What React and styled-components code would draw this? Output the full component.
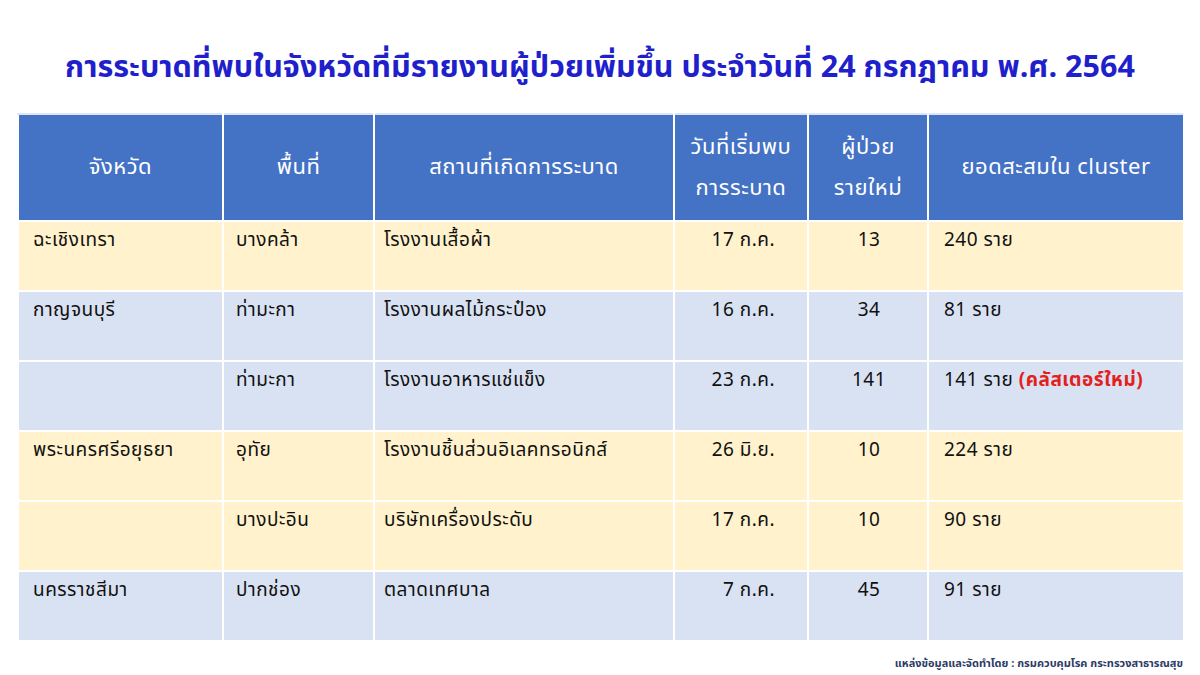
import React from 'react'
import styled, { createGlobalStyle } from 'styled-components'

const GlobalStyle = createGlobalStyle`
  body {
    margin: 0;
    background: #ffffff;
    font-family: Tahoma, "Noto Sans Thai", "Noto Sans", "DejaVu Sans", sans-serif;
  }
`

const Page = styled.div`
  width: 1200px;
  height: 675px;
  box-sizing: border-box;
  padding: 48px 17px 0 17px;
  display: flex;
  flex-direction: column;
`

const Title = styled.h1`
  margin: 0 0 25px 0;
  font-size: 30.5px;
  line-height: 40px;
  font-weight: 700;
  color: #1f1fcc;
  text-align: center;
  white-space: nowrap;
`

const Table = styled.table`
  width: 1166px;
  table-layout: fixed;
  border-collapse: collapse;
  font-size: 19px;
  letter-spacing: 0.5px;
`

const HeadCell = styled.th`
  height: 105px;
  padding: 0 4px;
  background: #4472c4;
  color: #ffffff;
  font-weight: 400;
  font-size: 22px;
  line-height: 41px;
  text-align: center;
  vertical-align: middle;
  border: 2px solid #ffffff;
  border-top-color: #dfe6f3;
  white-space: nowrap;
`

const Row = styled.tr`
  height: 70px;
  background: ${p => (p.$tone === 'yellow' ? '#fff2cc' : '#d9e2f3')};
`

const Cell = styled.td`
  padding: 7px ${p => (p.$align === 'right' ? '32px' : '10px')} 0 ${p => p.$indent || '14px'};
  vertical-align: top;
  text-align: ${p => p.$align || 'left'};
  color: #111111;
  line-height: 24px;
  border: 2px solid #ffffff;
  white-space: nowrap;
  overflow: hidden;
`

const NewTag = styled.span`
  color: #e3211c;
  font-weight: 700;
`

const Source = styled.div`
  margin-top: 13px;
  text-align: right;
  font-size: 11px;
  font-weight: 700;
  color: #2c3a66;
`

const rows = [
  { tone: 'yellow', province: 'ฉะเชิงเทรา', area: 'บางคล้า', place: 'โรงงานเสื้อผ้า', date: '17 ก.ค.', cases: '13', total: '240 ราย' },
  { tone: 'blue', province: 'กาญจนบุรี', area: 'ท่ามะกา', place: 'โรงงานผลไม้กระป๋อง', date: '16 ก.ค.', cases: '34', total: '81 ราย' },
  { tone: 'blue', province: '', area: 'ท่ามะกา', place: 'โรงงานอาหารแช่แข็ง', date: '23 ก.ค.', cases: '141', total: '141 ราย', isNew: true },
  { tone: 'yellow', province: 'พระนครศรีอยุธยา', area: 'อุทัย', place: 'โรงงานชิ้นส่วนอิเลคทรอนิกส์', date: '26 มิ.ย.', cases: '10', total: '224 ราย' },
  { tone: 'yellow', province: '', area: 'บางปะอิน', place: 'บริษัทเครื่องประดับ', date: '17 ก.ค.', cases: '10', total: '90 ราย' },
  { tone: 'blue', province: 'นครราชสีมา', area: 'ปากช่อง', place: 'ตลาดเทศบาล', date: '7 ก.ค.', cases: '45', total: '91 ราย' },
]

const App = () => {
  return (
    <Page>
      <GlobalStyle />
      <Title>การระบาดที่พบในจังหวัดที่มีรายงานผู้ป่วยเพิ่มขึ้น ประจำวันที่ 24 กรกฎาคม พ.ศ. 2564</Title>
      <Table>
        <colgroup>
          <col style={{ width: 205 }} />
          <col style={{ width: 151 }} />
          <col style={{ width: 300 }} />
          <col style={{ width: 134 }} />
          <col style={{ width: 120 }} />
          <col style={{ width: 256 }} />
        </colgroup>
        <thead>
          <tr>
            <HeadCell>จังหวัด</HeadCell>
            <HeadCell>พื้นที่</HeadCell>
            <HeadCell>สถานที่เกิดการระบาด</HeadCell>
            <HeadCell>วันที่เริ่มพบ<br />การระบาด</HeadCell>
            <HeadCell>ผู้ป่วย<br />รายใหม่</HeadCell>
            <HeadCell>ยอดสะสมใน cluster</HeadCell>
          </tr>
        </thead>
        <tbody>
          {rows.map((r, i) => (
            <Row key={i} $tone={r.tone}>
              <Cell>{r.province}</Cell>
              <Cell $indent="12px">{r.area}</Cell>
              <Cell $indent="9px">{r.place}</Cell>
              <Cell $align="right">{r.date}</Cell>
              <Cell $align="center" $indent="12px">{r.cases}</Cell>
              <Cell $indent="15px">
                {r.total}
                {r.isNew && <> <NewTag>(คลัสเตอร์ใหม่)</NewTag></>}
              </Cell>
            </Row>
          ))}
        </tbody>
      </Table>
      <Source>แหล่งข้อมูลและจัดทำโดย : กรมควบคุมโรค กระทรวงสาธารณสุข</Source>
    </Page>
  )
}

export default App
